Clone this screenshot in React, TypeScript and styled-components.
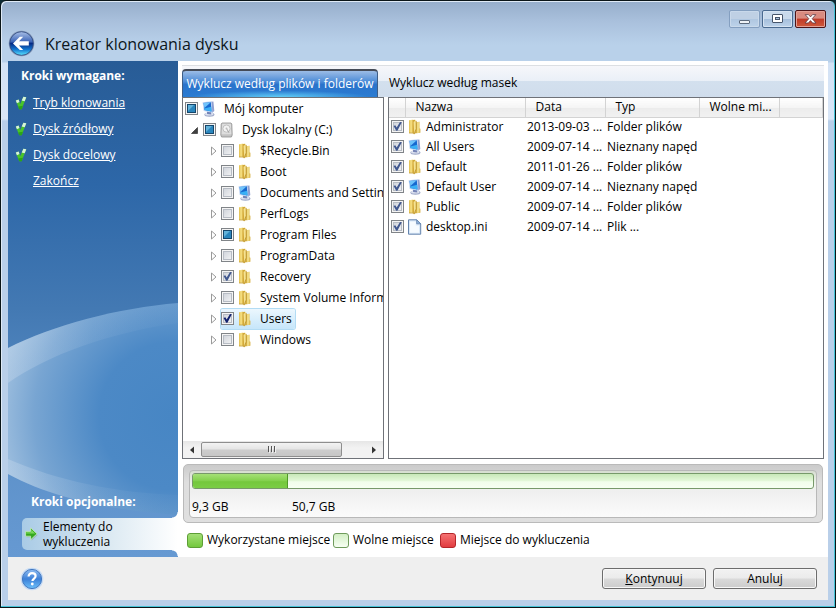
import React, { useId, useState } from 'react';
import styled, { createGlobalStyle, css } from 'styled-components';

const GlobalStyle = createGlobalStyle`
  * { box-sizing: border-box; }
  body {
    margin: 0;
    background: #0b2a33;
    font-family: "Open Sans", "Noto Sans", sans-serif;
    font-size: 12px;
    line-height: 16px;
    color: #000;
  }
  button, input { font: inherit; color: inherit; margin: 0; }
`;

/* ---------- window frame ---------- */

const Window = styled.div`
  display: flex;
  flex-direction: column;
  min-height: 100vh;
  padding: 0 7px 7px;
  border: 1px solid #0a1518;
  border-radius: 6px 6px 0 0;
  box-shadow: inset 0 -1px #45c3d6, inset -1px 0 #45c3d6, inset 1px 1px #dfeaf6;
  background: linear-gradient(#96aecb 0, #a9c0dc 20px, #b9d1ea 44px, #b9d1ea 61px, #d3e2f5 62px, #d9e6f7 118px, #b9cfe9 120px);
`;

const TitleBar = styled.header`
  display: flex;
  align-items: flex-end;
  height: 60px;
  padding-bottom: 4px;
`;

const WizardTitle = styled.h1`
  flex: 1;
  margin: 0 0 0 10px;
  font-size: 16px;
  line-height: 26px;
  font-weight: 400;
  color: #0c1620;
`;

const BackButton = styled.button`
  display: block;
  width: 27px;
  height: 27px;
  padding: 0;
  border: 0;
  background: none;
`;

const Caption = styled.div`
  display: flex;
  align-self: flex-start;
  gap: 2px;
  padding: 9px 2px 0 0;
`;

const CaptionButton = styled.button<{ $kind: 'dim' | 'plain' | 'close' }>`
  display: grid;
  place-items: center;
  width: 31px;
  height: 18px;
  padding: 0;
  border-radius: 2px;
  border: 1px solid #4a6a90;
  box-shadow: inset 0 0 0 1px #d5e3f2;
  background: linear-gradient(#c9daec 50%, #a5bfdc 50%, #bdd3ea);
  ${(p) => p.$kind === 'dim' && css`
    border-color: #849fc0;
    background: linear-gradient(#bfd0e4 50%, #afc6e0 50%, #bdd3ea);
    box-shadow: inset 0 0 0 1px #c9d9eb;
  `}
  ${(p) => p.$kind === 'close' && css`
    border-color: #4c1418;
    box-shadow: inset 0 0 0 1px #e3a197;
    background: linear-gradient(#d98b80 45%, #c03a28 50%, #cf5a3c);
  `}
`;

const Body = styled.div`
  flex: 1;
  display: grid;
  grid-template-columns: 170px minmax(0, 1fr);
  background: #fff;
`;

/* ---------- sidebar ---------- */

const Sidebar = styled.nav`
  position: relative;
  display: flex;
  flex-direction: column;
  color: #fff;
  background: #2c65a4;
`;

const Backdrop = styled.svg`
  position: absolute;
  inset: 0;
  width: 100%;
  height: 100%;
`;

const StepsTitle = styled.h2<{ $low?: boolean }>`
  position: relative;
  margin: ${(p) => (p.$low ? 'auto 0 8px 23px' : '7px 0 11px 13px')};
  font-size: 12px;
  line-height: 16px;
  font-weight: 700;
`;

const Steps = styled.ul`
  position: relative;
  display: grid;
  gap: 10px;
  margin: 0;
  padding: 0 0 0 7px;
  list-style: none;
`;

const Step = styled.li`
  display: grid;
  grid-template-columns: 18px 1fr;
  align-items: center;
`;

const StepLink = styled.a`
  grid-column: 2;
  color: #fff;
  text-decoration: underline;
`;

const ActiveStep = styled.a`
  position: relative;
  display: grid;
  grid-template-columns: 21px 1fr;
  align-items: center;
  margin: 0 0 7px 14px;
  padding: 1px 40px 1px 0;
  border-radius: 5px 0 0 5px;
  line-height: 15px;
  color: #000;
  text-decoration: none;
  background: linear-gradient(90deg, #a9cbe6, #d3e4ef 45%, #fff);
  &::before, &::after {
    content: '';
    position: absolute;
    right: 0;
    width: 6px;
    height: 6px;
  }
  &::before { bottom: 100%; background: radial-gradient(circle at 0 0, transparent 5px, #fff 6px); }
  &::after { top: 100%; background: radial-gradient(circle at 0 100%, transparent 5px, #fff 6px); }
`;

/* ---------- main area ---------- */

const Main = styled.main`
  display: flex;
  flex-direction: column;
  padding: 4px 4px 9px;
`;

const TabBar = styled.div`
  display: flex;
  align-items: flex-end;
  height: 32px;
  border-top: 1px solid #dcdfe3;
  background: linear-gradient(#f6f7fa, #e9eff7 50%, #d3e0ee 50%, #d0ddec);
`;

const Tab = styled.button<{ $active?: boolean }>`
  height: 28px;
  padding: 0 7px;
  border: 0;
  background: none;
  white-space: nowrap;
  ${(p) => p.$active && css`
    width: 196px;
    margin-right: 4px;
    padding: 0;
    color: #fff;
    border: 1px solid #3f5e86;
    border-top: 2px solid #454b57;
    border-bottom: 0;
    border-radius: 4px 4px 0 0;
    background:
      radial-gradient(ellipse at 50% 100%, rgba(110, 225, 255, 0.8), transparent 65%) 0 100% / 100% 7px no-repeat,
      linear-gradient(#9cbce6, #4f8ed8 40%, #2a73cb 52%, #2b7cd2);
  `}
`;

const Panels = styled.div`
  flex: 1;
  display: grid;
  grid-template-columns: 202px minmax(0, 1fr);
  gap: 4px;
`;

const Panel = styled.section`
  display: flex;
  flex-direction: column;
  min-width: 0;
  overflow: hidden;
  border: 1px solid #6f7278;
  background: #fff;
`;

const TreeList = styled.ul`
  margin: 0;
  padding: 0;
  list-style: none;
  & & & { padding-left: 18px; }
`;

const TreeRow = styled.div`
  display: flex;
  align-items: center;
  height: 21px;
  padding-left: 2px;
`;

const Twisty = styled.button`
  display: grid;
  place-items: center;
  flex: none;
  width: 18px;
  height: 18px;
  padding: 0;
  border: 0;
  background: none;
`;

const TreeItem = styled.label<{ $selected?: boolean }>`
  display: flex;
  align-items: center;
  gap: 3px;
  height: 20px;
  white-space: nowrap;
  border-radius: 2px;
  ${(p) => p.$selected && css`
    background: linear-gradient(#ecf7fe, #c6e6fa);
    box-shadow: 0 0 0 1px #b3dcf4;
  `}
`;

const TreeText = styled.span`
  padding: 0 3px 0 5px;
`;

const CheckWrap = styled.span`
  display: grid;
  flex: none;
  width: 13px;
  height: 13px;
  & > * { grid-area: 1 / 1; }
  svg { pointer-events: none; }
`;

const CheckInput = styled.input`
  appearance: none;
  width: 13px;
  height: 13px;
  border: 1px solid #808488;
  background: linear-gradient(135deg, #c9ced6, #f8f8f8);
  box-shadow: inset 0 0 0 1px #f4f4f4, inset 0 0 0 2px #b7bcc4;
`;

const HScroll = styled.div`
  display: grid;
  grid-template-columns: 18px 1fr 18px;
  height: 17px;
  margin-top: auto;
  background: linear-gradient(#e6e6e6, #f2f2f2 40%);
`;

const ScrollArrow = styled.button`
  display: grid;
  place-items: center;
  padding: 0;
  border: 0;
  background: none;
`;

const Thumb = styled.div`
  display: grid;
  place-items: center;
  width: 86%;
  height: 15px;
  margin-top: 1px;
  border: 1px solid #8e8e8e;
  border-radius: 2px;
  background: linear-gradient(#f3f3f3, #e4e4e4 48%, #cdcdcd 52%, #c6c6c6);
`;

const FileTable = styled.table`
  width: 100%;
  table-layout: fixed;
  border-collapse: collapse;
  white-space: nowrap;
`;

const HeadCell = styled.th`
  height: 19px;
  padding: 0 10px;
  font-weight: 400;
  text-align: left;
  overflow: hidden;
  border-right: 1px solid #d3d3d3;
  border-bottom: 1px solid #d3d3d3;
  background: linear-gradient(#fff, #f5f5f5 50%, #ececec 55%, #f1f1f1);
`;

const Cell = styled.td<{ $tick?: boolean }>`
  height: 20px;
  padding: ${(p) => (p.$tick ? '0 2px 2px' : '0 2px')};
  overflow: hidden;
`;

const NameCell = styled.div`
  display: flex;
  align-items: center;
  gap: 4px;
`;

/* ---------- usage gauge ---------- */

const Gauge = styled.section`
  margin: 5px 1px 0;
  padding: 5px 5px 4px;
  border: 1px solid #bababa;
  border-radius: 5px;
  background: linear-gradient(#cbcbcb, #dedede 30%, #dfdfdf);
`;

const GaugeInner = styled.div`
  padding: 2px;
  border: 1px solid #b8b8b8;
  border-radius: 4px;
  background: linear-gradient(#d6ddd0, #f1f5ee 14px, #efefef 20px, #fbfbfb);
`;

const Track = styled.div`
  display: flex;
  height: 16px;
  border: 1px solid #77996a;
  border-radius: 3px;
  overflow: hidden;
  background: linear-gradient(#c8e8b8, #e4f8da 50%, #f1fdeb 55%, #f6fff2);
`;

const Used = styled.div`
  border-right: 1px solid #4f9a26;
  background: linear-gradient(#a5e077, #82d04c 50%, #74c83c 55%, #7bcd45);
`;

const Amounts = styled.div`
  display: flex;
  padding-top: 10px;
`;

const Amount = styled.span`
  width: 100px;
`;

const Legend = styled.ul`
  display: grid;
  grid-template-columns: 146px 107px auto;
  margin: 0;
  padding: 9px 5px 0;
  list-style: none;
`;

const LegendItem = styled.li`
  display: flex;
  align-items: center;
  gap: 4px;
`;

const Swatch = styled.span<{ $tone: 'used' | 'free' | 'skip' }>`
  width: 16px;
  height: 15px;
  border-radius: 3px;
  ${(p) => p.$tone === 'used' && css`border: 1px solid #5d9e36; background: linear-gradient(#a3df76, #74c83e);`}
  ${(p) => p.$tone === 'free' && css`border: 1px solid #6f9b5c; background: linear-gradient(#d3efc5, #f7fff3);`}
  ${(p) => p.$tone === 'skip' && css`border: 1px solid #b4262a; background: linear-gradient(#f57272, #e23c40);`}
`;

/* ---------- footer ---------- */

const Footer = styled.footer`
  display: flex;
  align-items: center;
  gap: 7px;
  height: 43px;
  padding: 0 11px 0 12px;
  background: #efefef;
`;

const HelpButton = styled.button`
  width: 24px;
  height: 24px;
  margin-right: auto;
  padding: 0;
  border: 0;
  background: none;
`;

const PushButton = styled.button`
  width: 104px;
  height: 21px;
  padding: 0;
  line-height: 19px;
  border: 1px solid #6d6d6d;
  border-radius: 3px;
  box-shadow: inset 0 0 0 1px #f8f8f8;
  background: linear-gradient(#f2f2f2, #ebebeb 48%, #dadada 52%, #cccccc);
`;

/* ---------- icons ---------- */

const IconBox = styled.svg`
  display: block;
  flex: none;
`;

const FolderIcon = () => (
  <IconBox width="15" height="16" viewBox="0 0 15 16" aria-hidden="true">
    <path d="M8.5 3.4 12.4 2.8v6.4l1 .6v3.9L7.6 14.600z" fill="#d6b043" />
    <path d="M10 3.200 12.400 2.800v10.900l-2.400.3z" fill="#f0da82" />
    <path d="M2 1.600 5.800.6 6.200 13.700 2 14z" fill="#f3db7c" />
    <path d="M2 1.600 3.200 1.300V13.900L2 14z" fill="#e6c65c" />
    <path d="M5.400 1 8.200.8l.6 9-1.600 5.600-1.800-1.600z" fill="#d3a938" />
    <path d="M6.600 3 9.200 1v9l-1.900 5.300z" fill="#f6e291" />
    <path d="M7.200 15 9.200 9.800V2" fill="none" stroke="#b88f2b" strokeWidth=".8" />
    <path d="M2 14h4.400" stroke="#c39d39" strokeWidth=".8" />
  </IconBox>
);

const ComputerIcon = () => (
  <IconBox width="15" height="16" viewBox="0 0 15 16" aria-hidden="true">
    <ellipse cx="8.400" cy="13.600" rx="5" ry="2.200" fill="#9ea9c9" />
    <ellipse cx="8.200" cy="13" rx="4.200" ry="1.500" fill="#dde2f0" />
    <path d="M6 10.400 10 11l.3 2.500-4.200-.5z" fill="#7483b5" />
    <path d="M10 .8 12.400.5l.9 9.600-2.500 2z" fill="#8f9fd0" />
    <path d="m1.600 1.200 9-1 .8 11.600-8.700-1.800z" fill="#bcd3f3" />
    <path d="m2.600 2.100 7.200-.8.700 9.200-7-1.500z" fill="#1668cf" />
    <path d="M2.600 2.100 9.800 1.300 3.400 7z" fill="#6fc3fa" />
    <path d="m3.300 7.400 6.900-1.600.3 4.700-7-1.500z" fill="#39b0f5" />
  </IconBox>
);

const DriveIcon = () => (
  <IconBox width="15" height="16" viewBox="0 0 15 16" aria-hidden="true">
    <path d="M3 1h9l.8 1 .4 11-.8 2H2.600l-.8-2 .4-11z" fill="#c4c4c4" stroke="#909090" strokeWidth=".8" />
    <path d="M3.200 1.700h8.600l.6 10.600H2.600z" fill="#dedede" />
    <circle cx="7.500" cy="6.600" r="3.600" fill="#f3f3f3" stroke="#b5b5b5" strokeWidth=".8" />
    <circle cx="7.500" cy="6.600" r="1" fill="#bcbcbc" />
    <path d="m8 7.200 2 3.600" stroke="#a5a5a5" />
  </IconBox>
);

const FileIcon = () => (
  <IconBox width="15" height="16" viewBox="0 0 15 16" aria-hidden="true">
    <path d="M1.500.8h8.200l4 4v10.400H1.500z" fill="#d9e8f8" stroke="#6584ad" />
    <path d="M3 2.400h5.800v4H12v7.400H3z" fill="#f6fbff" />
    <path d="M9.700.8v4h4z" fill="#8fb2da" stroke="#6584ad" strokeWidth=".8" />
  </IconBox>
);

const CheckmarkIcon = () => (
  <IconBox width="12" height="14" viewBox="0 0 12 14" aria-hidden="true">
    <path d="M.8 4.600 3.600 3.400 5.200 8 8.400.8l2.900.4L6.700 13.200H4.200z" fill="#49c32b" />
    <path d="M.8 4.600 3.600 3.400 4.500 6 1.900 7.200zM8.400.8l2.900.4L9.700 5.200 6.700 4.600z" fill="#d8f3dc" />
    <path d="M3.200 10.400 4.200 13.200h2.500l1.300-3.400z" fill="#2aa517" />
  </IconBox>
);

const ArrowIcon = () => (
  <IconBox width="18" height="16" viewBox="0 0 18 16" aria-hidden="true">
    <path d="M4.600 6.800h5V3.400l6 5.600-6 5.600v-3.400h-5z" fill="#7c9a90" opacity=".5" />
    <path d="M3.600 5.400h5V1.800l6.400 6-6.400 6v-3.600h-5z" fill="#35a81e" stroke="#c9ecc0" strokeWidth=".8" />
    <path d="M4.200 6.200h5V3.800l4 3.800h-9z" fill="#7cd95c" />
  </IconBox>
);

const BackIcon = () => (
  <IconBox width="27" height="27" viewBox="0 0 27 27" aria-hidden="true">
    <defs>
      <linearGradient id="back-fill" x2="0" y2="1">
        <stop offset="0" stopColor="#a9bfe6" />
        <stop offset=".42" stopColor="#3f67b8" />
        <stop offset=".5" stopColor="#062c86" />
        <stop offset=".75" stopColor="#1276cf" />
        <stop offset="1" stopColor="#5de6ff" />
      </linearGradient>
    </defs>
    <circle cx="13.500" cy="13.500" r="12.800" fill="#8295b5" />
    <circle cx="13.500" cy="13.500" r="11.800" fill="url(#back-fill)" stroke="#2f4a80" strokeWidth=".8" />
    <path d="M5 13.400 11.800 6.800h3.400L11 11.300h9.800v4.200H11l4.200 4.600h-3.400z" fill="#fff" />
  </IconBox>
);

const HelpIcon = () => (
  <IconBox width="24" height="24" viewBox="0 0 24 24" aria-hidden="true">
    <defs>
      <linearGradient id="help-fill" x2="0" y2="1">
        <stop offset="0" stopColor="#8fbdf2" />
        <stop offset=".5" stopColor="#3c80d8" />
        <stop offset="1" stopColor="#6cc0fa" />
      </linearGradient>
    </defs>
    <circle cx="12" cy="12" r="11.300" fill="#c4daf4" />
    <circle cx="12" cy="12" r="9.600" fill="url(#help-fill)" stroke="#4277c0" />
    <path d="M8.600 9.600c0-2.200 1.500-3.400 3.500-3.400s3.500 1.100 3.500 2.900c0 2.400-3 2.400-3.200 4.900" fill="none" stroke="#fff" strokeWidth="2.200" />
    <circle cx="12.300" cy="17" r="1.400" fill="#fff" />
  </IconBox>
);

const MinimizeIcon = () => (
  <IconBox width="13" height="12" viewBox="0 0 13 12" aria-hidden="true">
    <rect x="1.5" y="7.5" width="10" height="3" rx=".5" fill="#eef2f6" stroke="#5c6a7c" />
  </IconBox>
);

const MaximizeIcon = () => (
  <IconBox width="13" height="10" viewBox="0 0 13 10" aria-hidden="true">
    <rect x="1.5" y=".5" width="10" height="8" rx=".5" fill="#fff" stroke="#46556b" />
    <rect x="4.5" y="3.5" width="4" height="2" fill="#a9c0dc" stroke="#46556b" />
  </IconBox>
);

const CloseIcon = () => (
  <IconBox width="13" height="10" viewBox="0 0 13 10" aria-hidden="true">
    <path d="M1.200.6h3.300l2 2.300L8.500.6h3.300L8.200 4.700 12 9H8.600L6.500 6.600 4.400 9H1l3.800-4.300z" fill="#fff" stroke="#5a3a44" strokeWidth=".8" />
  </IconBox>
);

const icons = { folder: FolderIcon, computer: ComputerIcon, drive: DriveIcon, file: FileIcon };
type IconName = keyof typeof icons;
type CheckState = 'off' | 'on' | 'mixed';

const TickBox = ({ initial, strong, id, label }: { initial: CheckState; strong?: boolean; id?: string; label?: string }) => {
  const [state, setState] = useState<CheckState>(initial);
  return (
    <CheckWrap>
      <CheckInput
        id={id}
        aria-label={label}
        type="checkbox"
        checked={state === 'on'}
        ref={(el: HTMLInputElement | null) => {
          if (el) el.indeterminate = state === 'mixed';
        }}
        onChange={() => setState(state === 'on' ? 'off' : 'on')}
      />
      <svg width="13" height="13" viewBox="0 0 13 13" aria-hidden="true">
        {state === 'on' && (
          <path d="M2.600 6 4.300 5.200 5.700 7.600 9 2l1.800.3L6.400 10.800H5.200z" fill={strong ? '#12226e' : '#41588f'} />
        )}
        {state === 'mixed' && (
          <>
            <rect x="2.5" y="2.5" width="8" height="8" fill="#2a86bd" stroke="#15466b" />
            <path d="M3 3h6L3 9z" fill="#7cc4e6" opacity=".7" />
          </>
        )}
      </svg>
    </CheckWrap>
  );
};

/* ---------- data ---------- */

type Node = {
  name: string;
  icon: IconName;
  state: CheckState;
  twisty?: 'open' | 'closed';
  selected?: boolean;
  children?: Node[];
};

const leaf = (name: string, state: CheckState = 'off', icon: IconName = 'folder', selected = false): Node => ({
  name, icon, state, selected, twisty: 'closed',
});

const tree: Node[] = [
  {
    name: 'Mój komputer',
    icon: 'computer',
    state: 'mixed',
    children: [
      {
        name: 'Dysk lokalny (C:)',
        icon: 'drive',
        state: 'mixed',
        twisty: 'open',
        children: [
          leaf('$Recycle.Bin'),
          leaf('Boot'),
          leaf('Documents and Settings', 'off', 'computer'),
          leaf('PerfLogs'),
          leaf('Program Files', 'mixed'),
          leaf('ProgramData'),
          leaf('Recovery', 'on'),
          leaf('System Volume Information'),
          leaf('Users', 'on', 'folder', true),
          leaf('Windows'),
        ],
      },
    ],
  },
];

const files: { name: string; date: string; type: string; icon: IconName }[] = [
  { name: 'Administrator', date: '2013-09-03 ...', type: 'Folder plików', icon: 'folder' },
  { name: 'All Users', date: '2009-07-14 ...', type: 'Nieznany napęd', icon: 'computer' },
  { name: 'Default', date: '2011-01-26 ...', type: 'Folder plików', icon: 'folder' },
  { name: 'Default User', date: '2009-07-14 ...', type: 'Nieznany napęd', icon: 'computer' },
  { name: 'Public', date: '2009-07-14 ...', type: 'Folder plików', icon: 'folder' },
  { name: 'desktop.ini', date: '2009-07-14 ...', type: 'Plik ...', icon: 'file' },
];

const steps = [
  { name: 'Tryb klonowania', done: true },
  { name: 'Dysk źródłowy', done: true },
  { name: 'Dysk docelowy', done: true },
  { name: 'Zakończ', done: false },
];

const TreeNode = ({ node }: { node: Node }) => {
  const Icon = icons[node.icon];
  const id = useId();
  return (
    <li>
      <TreeRow>
        {node.twisty && (
          <Twisty aria-label={node.name} aria-expanded={node.twisty === 'open'}>
            <svg width="12" height="10" viewBox="0 0 12 10" aria-hidden="true">
              {node.twisty === 'open' ? (
                <path d="M9.5 2.500v6h-6z" fill="#404040" stroke="#222" strokeWidth=".6" />
              ) : (
                <path d="M5.500 1v8l4.500-4z" fill="#fff" stroke="#9a9a9a" />
              )}
            </svg>
          </Twisty>
        )}
        <TreeItem htmlFor={id} $selected={node.selected}>
          <TickBox id={id} initial={node.state} strong={node.selected} />
          <Icon />
          <TreeText>{node.name}</TreeText>
        </TreeItem>
      </TreeRow>
      {node.children && (
        <TreeList>
          {node.children.map((c) => <TreeNode key={c.name} node={c} />)}
        </TreeList>
      )}
    </li>
  );
};

const SidebarArt = () => (
  <Backdrop viewBox="0 0 170 496" preserveAspectRatio="none" aria-hidden="true">
    <defs>
      <linearGradient id="sky" x2="0" y2="1">
        <stop offset="0" stopColor="#285c96" />
        <stop offset=".25" stopColor="#2d67a8" />
        <stop offset=".5" stopColor="#4379b3" />
        <stop offset=".75" stopColor="#5c90c8" />
        <stop offset="1" stopColor="#6699d2" />
      </linearGradient>
      <radialGradient id="orb" gradientUnits="userSpaceOnUse" cx="165" cy="355" r="185">
        <stop offset="0" stopColor="#4786c4" />
        <stop offset=".4" stopColor="#4c89c6" />
        <stop offset=".75" stopColor="#78a5d2" />
        <stop offset="1" stopColor="#a9c6e2" />
      </radialGradient>
      <linearGradient id="rim" x2="1" y2="0">
        <stop offset="0" stopColor="#d5e3f2" stopOpacity=".3" />
        <stop offset=".5" stopColor="#d5e3f2" stopOpacity=".08" />
        <stop offset="1" stopColor="#d5e3f2" stopOpacity=".02" />
      </linearGradient>
    </defs>
    <rect width="170" height="496" fill="url(#sky)" />
    <path d="M0 287C45 264 110 247 170 242V454C110 450 45 438 0 413z" fill="url(#orb)" />
    <path d="M0 287C45 264 110 247 170 242V262C100 272 40 294 0 322z" fill="url(#rim)" />
    <path d="M0 398C50 420 110 432 170 434V454C110 450 45 438 0 413z" fill="url(#rim)" />
  </Backdrop>
);

export default function App() {
  return (
    <>
      <GlobalStyle />
      <Window>
        <TitleBar>
          <BackButton aria-label="Wstecz"><BackIcon /></BackButton>
          <WizardTitle>Kreator klonowania dysku</WizardTitle>
          <Caption>
            <CaptionButton $kind="dim" aria-label="Minimalizuj"><MinimizeIcon /></CaptionButton>
            <CaptionButton $kind="plain" aria-label="Maksymalizuj"><MaximizeIcon /></CaptionButton>
            <CaptionButton $kind="close" aria-label="Zamknij"><CloseIcon /></CaptionButton>
          </Caption>
        </TitleBar>

        <Body>
          <Sidebar>
            <SidebarArt />
            <StepsTitle>Kroki wymagane:</StepsTitle>
            <Steps>
              {steps.map((s) => (
                <Step key={s.name}>
                  {s.done && <CheckmarkIcon />}
                  <StepLink href="#">{s.name}</StepLink>
                </Step>
              ))}
            </Steps>
            <StepsTitle $low>Kroki opcjonalne:</StepsTitle>
            <ActiveStep href="#" aria-current="step">
              <ArrowIcon />
              <span>Elementy do wykluczenia</span>
            </ActiveStep>
          </Sidebar>

          <Main>
            <TabBar role="tablist">
              <Tab $active role="tab" aria-selected="true">Wyklucz według plików i folderów</Tab>
              <Tab role="tab" aria-selected="false">Wyklucz według masek</Tab>
            </TabBar>

            <Panels>
              <Panel>
                <TreeList>
                  {tree.map((n) => <TreeNode key={n.name} node={n} />)}
                </TreeList>
                <HScroll>
                  <ScrollArrow aria-label="W lewo">
                    <svg width="6" height="8" viewBox="0 0 6 8" aria-hidden="true"><path d="M5 .5v7L1 4z" fill="#333" /></svg>
                  </ScrollArrow>
                  <Thumb>
                    <svg width="9" height="7" viewBox="0 0 9 7" aria-hidden="true">
                      <path d="M1.5 0v6M4.5 0v6M7.5 0v6" stroke="#555" />
                      <path d="M2.5 1v6M5.5 1v6M8.5 1v6" stroke="#fff" opacity=".7" />
                    </svg>
                  </Thumb>
                  <ScrollArrow aria-label="W prawo">
                    <svg width="6" height="8" viewBox="0 0 6 8" aria-hidden="true"><path d="M1 .5v7L5 4z" fill="#333" /></svg>
                  </ScrollArrow>
                </HScroll>
              </Panel>

              <Panel>
                <FileTable>
                  <colgroup>
                    <col width="16" />
                    <col width="120" />
                    <col width="80" />
                    <col width="94" />
                    <col width="80" />
                    <col />
                  </colgroup>
                  <thead>
                    <tr>
                      <HeadCell />
                      <HeadCell>Nazwa</HeadCell>
                      <HeadCell>Data</HeadCell>
                      <HeadCell>Typ</HeadCell>
                      <HeadCell>Wolne mi...</HeadCell>
                      <HeadCell />
                    </tr>
                  </thead>
                  <tbody>
                    {files.map((f) => {
                      const Icon = icons[f.icon];
                      return (
                        <tr key={f.name}>
                          <Cell $tick><TickBox initial="on" label={f.name} /></Cell>
                          <Cell><NameCell><Icon />{f.name}</NameCell></Cell>
                          <Cell>{f.date}</Cell>
                          <Cell>{f.type}</Cell>
                          <Cell />
                          <Cell />
                        </tr>
                      );
                    })}
                  </tbody>
                </FileTable>
              </Panel>
            </Panels>

            <Gauge>
              <GaugeInner>
                <Track><Used style={{ width: `${(9.3 / 60.9) * 100}%` }} /></Track>
                <Amounts>
                  <Amount>9,3 GB</Amount>
                  <Amount>50,7 GB</Amount>
                </Amounts>
              </GaugeInner>
            </Gauge>
            <Legend>
              <LegendItem><Swatch $tone="used" />Wykorzystane miejsce</LegendItem>
              <LegendItem><Swatch $tone="free" />Wolne miejsce</LegendItem>
              <LegendItem><Swatch $tone="skip" />Miejsce do wykluczenia</LegendItem>
            </Legend>
          </Main>
        </Body>

        <Footer>
          <HelpButton aria-label="Pomoc"><HelpIcon /></HelpButton>
          <PushButton><u>K</u>ontynuuj</PushButton>
          <PushButton>Anuluj</PushButton>
        </Footer>
      </Window>
    </>
  );
}
